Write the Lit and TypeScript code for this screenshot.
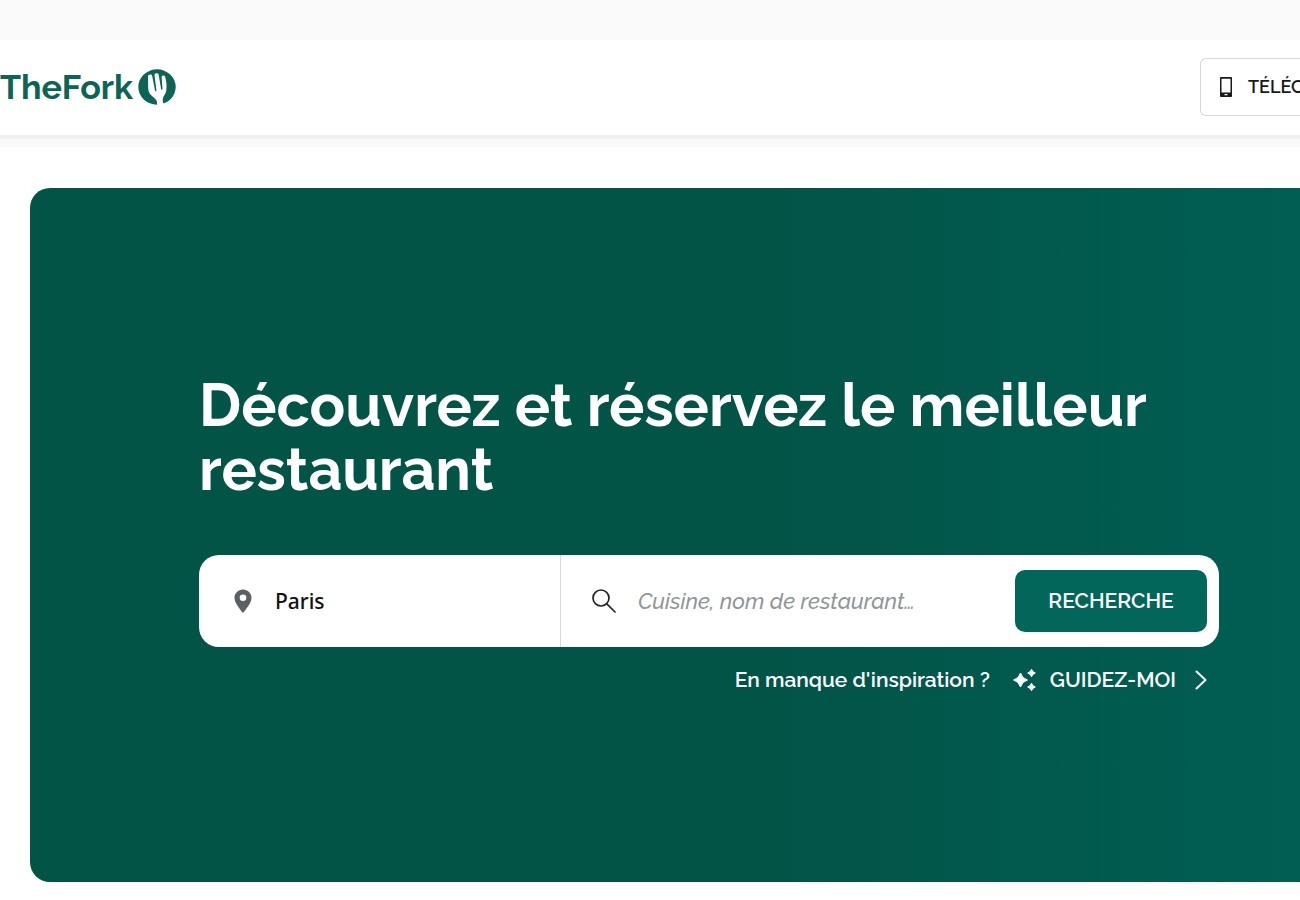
import { LitElement, html, css, svg } from "lit";
import { customElement } from "lit/decorators.js";

const forkMark = svg`
  <svg class="mark" viewBox="0 0 38 36" aria-hidden="true">
    <ellipse cx="19" cy="18" rx="18.700" ry="17.700" fill="currentColor"/>
    <path fill="#fff" d="M10 7.500C10 5.300 13.600 4.800 14.200 7L17 21.500C17.200 22.500 18.500 22.300 18.400 21.300L16.500 6C16.400 3.900 20.100 3.500 20.600 5.500L23.100 20C23.300 21 24.600 20.800 24.500 19.800L23.600 8C23.600 6 26.700 5.900 27.200 7.800C28.500 13 28.900 17.500 28.300 21.500C27.600 25.500 25 27 24.800 30.500C24.700 32.500 24.900 33.700 25.800 34.500L25.500 36H19V35C19.400 31.500 17.500 29.800 14.500 27.500C11.200 25 10.400 22.500 10.200 19Z"/>
  </svg>`;

const phoneIcon = svg`
  <svg class="phone" viewBox="0 0 12 20" aria-hidden="true">
    <path fill="currentColor" fill-rule="evenodd" d="M1 0H11Q12 0 12 1V19Q12 20 11 20H1Q0 20 0 19V1Q0 0 1 0ZM1.500 1.800V15.500H10.500V1.800ZM4.500 17V18.300H7.500V17Z"/>
  </svg>`;

const pinIcon = svg`
  <svg class="pin" viewBox="0 0 18 24" aria-hidden="true">
    <path fill="currentColor" fill-rule="evenodd" d="M9 0.500C4.200 0.500 0.500 4.200 0.500 8.800C0.500 14 5.500 19.500 8.200 23.200Q9 24 9.800 23.200C12.500 19.500 17.500 14 17.500 8.800C17.500 4.200 13.800 0.500 9 0.500ZM9 5.500A3.300 3.300 0 1 1 9 12.100A3.300 3.300 0 1 1 9 5.500Z"/>
  </svg>`;

const searchIcon = svg`
  <svg class="glass" viewBox="0 0 24 24" aria-hidden="true" fill="none" stroke="currentColor" stroke-width="1.700" stroke-linecap="round">
    <circle cx="9" cy="9" r="8"/>
    <path d="M14.800 14.800L23 23"/>
  </svg>`;

const sparkleIcon = svg`
  <svg class="sparkle" viewBox="0 0 24 24" aria-hidden="true" fill="currentColor" stroke="currentColor" stroke-width="1" stroke-linejoin="round">
    <path d="M7.500 5Q9 10.500 14.500 12Q9 13.500 7.500 19Q6 13.500 0.500 12Q6 10.500 7.500 5Z"/>
    <path d="M18.500 1.200Q19.400 4.100 22.300 5Q19.400 5.900 18.500 8.800Q17.600 5.900 14.700 5Q17.600 4.100 18.500 1.200Z"/>
    <path d="M18.500 15.200Q19.400 18.100 22.300 19Q19.400 19.900 18.500 22.800Q17.600 19.900 14.700 19Q17.600 18.100 18.500 15.200Z"/>
  </svg>`;

const chevronIcon = svg`
  <svg class="chevron" viewBox="0 0 12 20" aria-hidden="true" fill="none" stroke="currentColor" stroke-width="2" stroke-linecap="round" stroke-linejoin="round">
    <path d="M1.500 1.500L10.500 10L1.500 18.500"/>
  </svg>`;

@customElement("app-root")
export class AppRoot extends LitElement {
  static styles = css`
    :host {
      display: block;
      min-height: 100vh;
      overflow: hidden;
      background: #fff;
      color: #17191a;
      font-family: Raleway, Lato, sans-serif;
    }
    *, *::before, *::after { box-sizing: border-box; }
    svg { display: block; flex: none; }
    .strip { height: 40px; background: #fafafa; }
    .header {
      display: flex;
      align-items: center;
      justify-content: space-between;
      height: 95px;
      padding-bottom: 2px;
      background: #fff;
      box-shadow: 0 4px 0 #f0f0f0, 0 12px 0 #f9f9f9;
    }
    .logo {
      display: flex;
      align-items: center;
      gap: 5px;
      color: #0b6456;
      font-size: 34px;
      line-height: 40px;
      font-weight: 700;
      text-decoration: none;
    }
    .mark { width: 38px; height: 36px; }
    .download {
      display: flex;
      align-items: center;
      gap: 16px;
      width: 100px;
      height: 58px;
      padding: 0 0 0 19px;
      overflow: hidden;
      border: 1px solid #d5d7d8;
      border-right: 0;
      border-radius: 6px 0 0 6px;
      background: #fff;
      color: #17191a;
      font: 600 18px/24px Raleway, Lato, sans-serif;
    }
    .phone { width: 12px; height: 20px; }
    .hero {
      margin: 53px 0 18px 30px;
      padding: 186px 81px 188px 169px;
      border-radius: 20px 0 0 20px;
      background: linear-gradient(90deg, #025447 0%, #025447 58%, #015e53 100%);
      color: #fff;
    }
    .title {
      margin: 0 0 53px;
      font-size: 59px;
      line-height: 64px;
      font-weight: 700;
    }
    .search {
      display: flex;
      height: 92px;
      border-radius: 20px;
      background: #fff;
    }
    .field { display: flex; align-items: center; min-width: 0; }
    .place {
      flex: 0 0 362px;
      gap: 23px;
      padding: 0 20px 0 35px;
      border-right: 1px solid #d8dadb;
      color: #5b6064;
    }
    .query { flex: 1; gap: 22px; padding-left: 31px; color: #222425; }
    .pin { width: 18px; height: 24px; }
    .glass { width: 24px; height: 24px; }
    .input {
      flex: 1;
      min-width: 0;
      padding: 0;
      border: 0;
      outline: 0;
      background: none;
      color: #111;
      font: 500 21px/28px "Noto Sans", sans-serif;
    }
    .cuisine { font: italic 500 22px/28px Raleway, Lato, sans-serif; }
    .cuisine::placeholder { color: #8f9699; opacity: 1; }
    .submit {
      align-self: center;
      flex: none;
      width: 192px;
      height: 62px;
      margin-right: 12px;
      padding: 0;
      border: 0;
      border-radius: 10px;
      background: #02665a;
      color: #fff;
      font: 600 21px/28px Raleway, Lato, sans-serif;
    }
    .inspire {
      display: flex;
      align-items: center;
      justify-content: flex-end;
      gap: 23px;
      margin-top: 19px;
      padding-right: 12px;
      font-size: 21px;
      line-height: 28px;
      font-weight: 600;
    }
    .guide {
      display: flex;
      align-items: center;
      gap: 13px;
      color: inherit;
      text-decoration: none;
    }
    .sparkle { width: 24px; height: 24px; }
    .chevron { width: 12px; height: 20px; margin-left: 6px; }
  `;

  render() {
    return html`
      <div class="strip"></div>
      <header class="header">
        <a class="logo" href="#"><span>TheFork</span>${forkMark}</a>
        <button class="download" type="button">${phoneIcon}<span>TÉLÉC</span></button>
      </header>
      <main class="hero">
        <h1 class="title">Découvrez et réservez le meilleur restaurant</h1>
        <form class="search" @submit=${(e: Event) => e.preventDefault()}>
          <label class="field place">${pinIcon}<input class="input" type="text" name="place" aria-label="Paris" .value=${"Paris"} /></label>
          <label class="field query">${searchIcon}<input class="input cuisine" type="text" name="query" aria-label="Cuisine, nom de restaurant…" placeholder="Cuisine, nom de restaurant…" /></label>
          <button class="submit" type="submit">RECHERCHE</button>
        </form>
        <div class="inspire">
          <span>En manque d'inspiration ?</span>
          <a class="guide" href="#">${sparkleIcon}<span>GUIDEZ-MOI</span>${chevronIcon}</a>
        </div>
      </main>
    `;
  }
}
